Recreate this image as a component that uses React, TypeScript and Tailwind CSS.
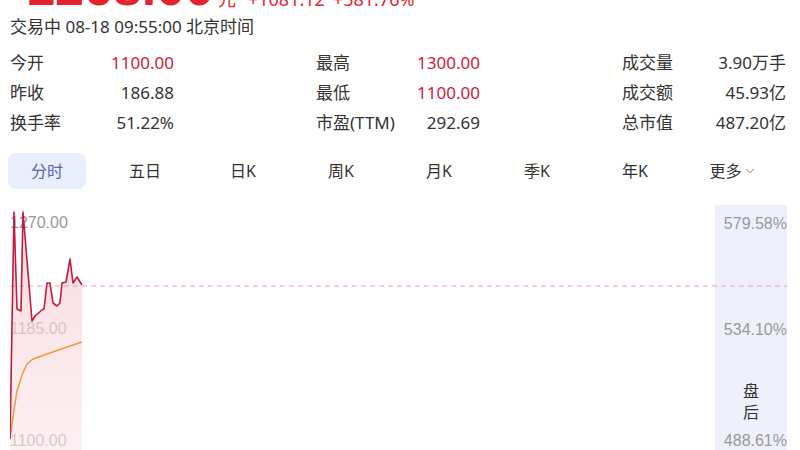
import { ChevronDown } from "lucide-react";

const stats = [
  [
    { label: "今开", value: "1100.00", red: true },
    { label: "最高", value: "1300.00", red: true },
    { label: "成交量", value: "3.90万手", red: false },
  ],
  [
    { label: "昨收", value: "186.88", red: false },
    { label: "最低", value: "1100.00", red: true },
    { label: "成交额", value: "45.93亿", red: false },
  ],
  [
    { label: "换手率", value: "51.22%", red: false },
    { label: "市盈(TTM)", value: "292.69", red: false },
    { label: "总市值", value: "487.20亿", red: false },
  ],
];

const tabs = ["分时", "五日", "日K", "周K", "月K", "季K", "年K"];

// price & average lines, chart-local coords (x from page 10, y from page 204)
const pricePts: [number, number][] = [
  [0, 234], [4, 7], [7, 104], [11, 106], [13, 7], [22, 116], [25, 111],
  [32, 105], [34, 104], [37, 78], [40, 78], [43, 98], [47, 101], [50, 98],
  [52, 78], [56, 77], [60, 54], [63, 78], [67, 72], [72, 80],
];
const avgPts: [number, number][] = [
  [0, 234], [4, 205], [7, 186], [12, 170], [17, 159], [23, 154], [40, 148],
  [57, 142], [72, 137],
];

const toPath = (pts: [number, number][]) =>
  pts.map(([x, y], i) => `${i ? "L" : "M"}${x} ${y}`).join(" ");

function Chart() {
  const fill = `${toPath(pricePts)} L72 250 L0 250 Z`;
  return (
    <div className="relative flex h-[250px] font-['Liberation_Sans',sans-serif] text-[16px] text-[#999]">
      {/* left axis */}
      <div className="flex flex-1 flex-col leading-[20px]">
        <div className="mt-[8px]">1270.00</div>
        <div className="mt-[86px]">1185.00</div>
        <div className="mt-[92px]">1100.00</div>
      </div>
      {/* after-hours column */}
      <div className="flex w-[72px] flex-col items-end bg-[#eef0fb] leading-[20px]">
        <div className="mt-[9px]">579.58%</div>
        <div className="mt-[86px]">534.10%</div>
        <div className="mt-[40px] flex w-full flex-col items-center font-['Noto_Sans_CJK_SC',sans-serif] text-[16px] leading-[21px] text-[#333]">
          <span>盘</span>
          <span>后</span>
        </div>
        <div className="mt-[9px]">488.61%</div>
      </div>
      <svg className="absolute inset-0 h-full w-full" viewBox="0 0 777 250" preserveAspectRatio="none">
        <defs>
          <linearGradient id="pf" x1="0" y1="0" x2="0" y2="1">
            <stop offset="0" stopColor="#f7c9d2" stopOpacity="0.7" />
            <stop offset="1" stopColor="#fbe7eb" stopOpacity="0.6" />
          </linearGradient>
        </defs>
        <path d={fill} fill="url(#pf)" />
        <line x1="0" y1="81" x2="777" y2="81" stroke="#e9a3ad" strokeWidth="1" strokeDasharray="5 4" />
        <path d={toPath(avgPts)} fill="none" stroke="#ee9a3a" strokeWidth="1.5" />
        <path d={toPath(pricePts)} fill="none" stroke="#c41a3b" strokeWidth="1.6" strokeLinejoin="round" />
      </svg>
    </div>
  );
}

export default function App() {
  return (
    <div className="h-[450px] w-[800px] overflow-hidden bg-white pl-[10px] pr-[13px] font-['Noto_Sans','Noto_Sans_CJK_SC',sans-serif] text-[#333]">
      {/* price header, scrolled mostly out of view */}
      <div className="-mt-[39px] flex items-baseline whitespace-nowrap text-[#e5232c]">
        <span className="pl-[16px] font-['Liberation_Sans',sans-serif] text-[52px] font-bold leading-none">1268.00</span>
        <span className="flex translate-y-[1px] items-baseline text-[18px] leading-none">
          <span className="ml-[4px]">元</span>
          <span className="ml-[12px]">+1081.12</span>
          <span className="ml-[8px]">+581.76%</span>
        </span>
      </div>

      <div className="mt-[2px] text-[17px] leading-[24px]">交易中 08-18 09:55:00 北京时间</div>

      <div className="mt-[9px] grid grid-cols-[306px_306px_1fr] text-[17px] leading-[30px]">
        {stats.flat().map((s) => (
          <div key={s.label} className="flex w-[164px] justify-between">
            <span>{s.label}</span>
            <span className={s.red ? "text-[#c9213e]" : ""}>{s.value}</span>
          </div>
        ))}
      </div>

      <div className="-ml-[2px] mt-[15px] flex gap-[20px] text-[16px]">
        {tabs.map((t, i) => (
          <div
            key={t}
            className={`flex h-9 w-[78px] items-center justify-center rounded-lg ${
              i === 0 ? "bg-[#e8eefc] text-[#5567b3]" : ""
            }`}
          >
            {t}
          </div>
        ))}
        <div className="flex h-9 w-[78px] items-center justify-center">
          更多
          <ChevronDown className="ml-[1px] h-[14px] w-[14px] text-[#666]" strokeWidth={1.5} />
        </div>
      </div>

      <div className="mt-[16px]">
        <Chart />
      </div>
    </div>
  );
}
